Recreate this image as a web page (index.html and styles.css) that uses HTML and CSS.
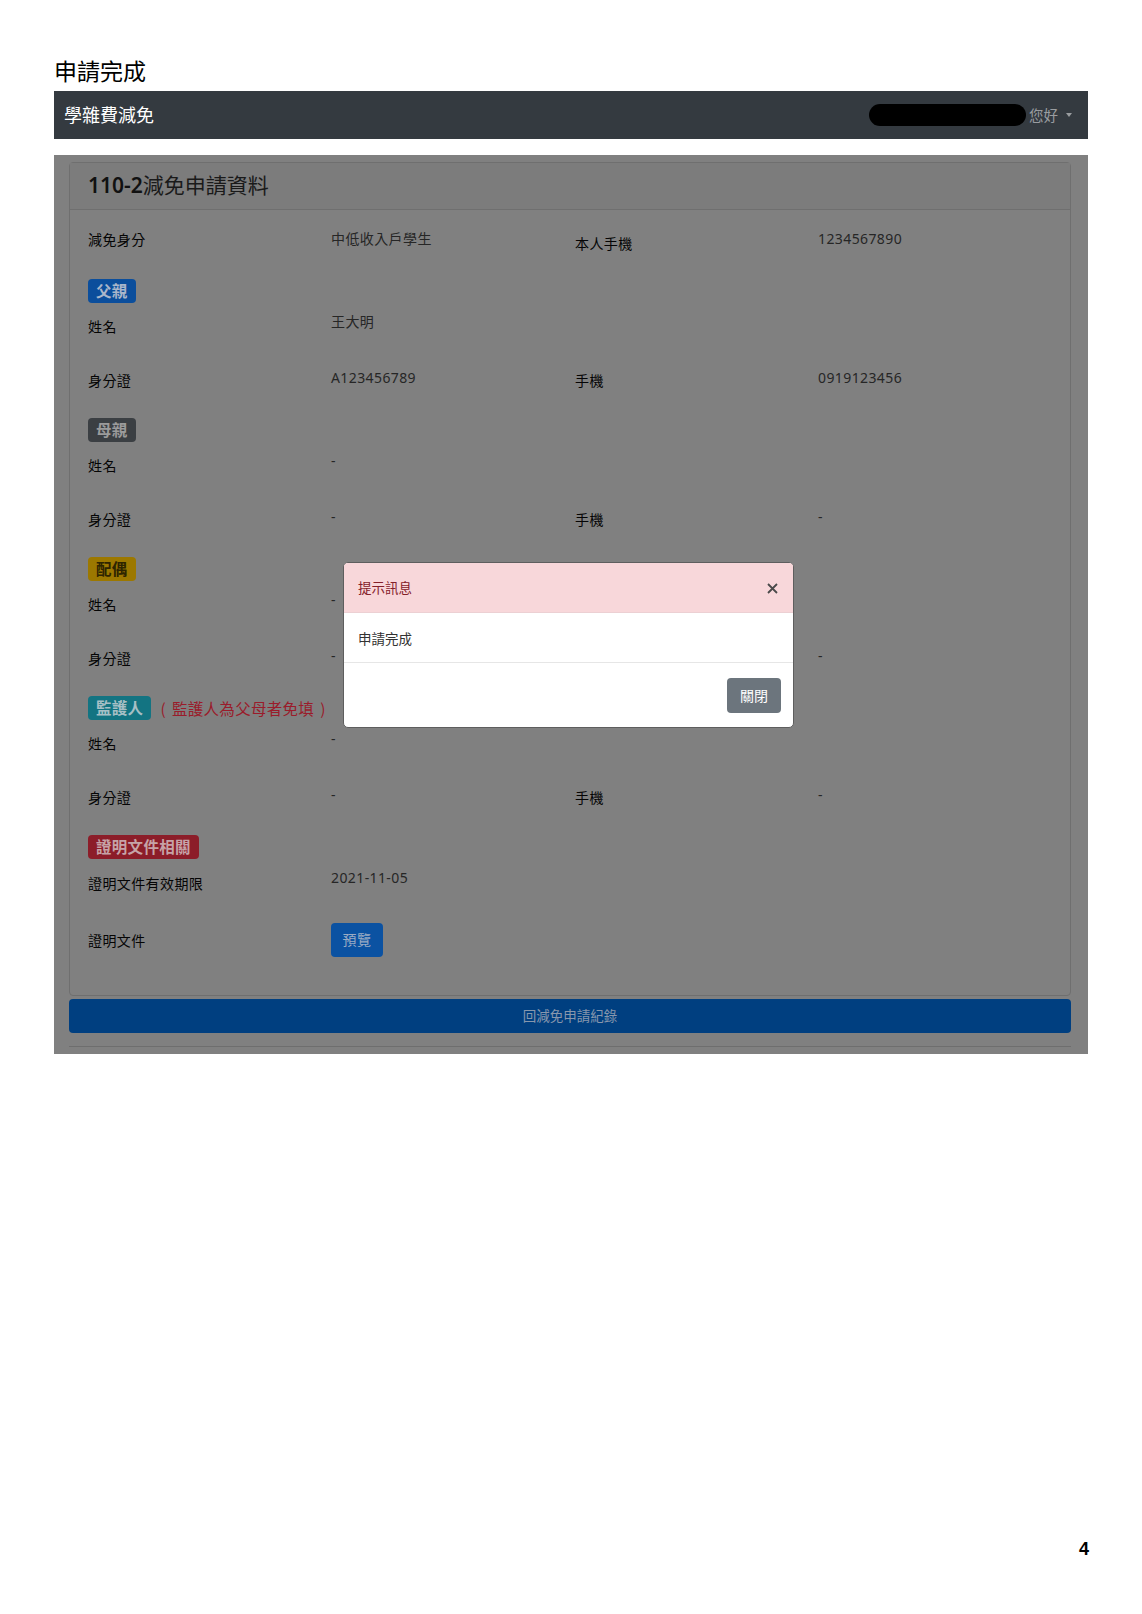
FILE: index.html
```html
<!DOCTYPE html>
<html lang="zh-Hant">
<head>
<meta charset="utf-8">
<title>申請完成</title>
<link rel="stylesheet" href="styles.css">
</head>
<body>
<div class="page">
  <h1 class="doc-title">申請完成</h1>
  <div class="shot">
    <nav class="navbar">
      <span class="brand">學雜費減免</span>
      <div class="user">
        <span class="redact"></span>
        <span class="hello">您好</span>
        <span class="caret"></span>
      </div>
    </nav>
    <div class="app">
      <div class="card">
        <div class="card-header"><span class="num">110-2</span>減免申請資料</div>
        <div class="card-body">
          <div class="row first">
            <div class="lbl">減免身分</div>
            <div class="val">中低收入戶學生</div>
            <div class="lbl low">本人手機</div>
            <div class="val">1234567890</div>
          </div>

          <div class="section">
            <div class="badge-line"><span class="badge b-primary">父親</span></div>
            <div class="row">
              <div class="lbl">姓名</div>
              <div class="val">王大明</div>
            </div>
            <div class="row second">
              <div class="lbl">身分證</div>
              <div class="val">A123456789</div>
              <div class="lbl">手機</div>
              <div class="val">0919123456</div>
            </div>
          </div>

          <div class="section">
            <div class="badge-line"><span class="badge b-dark">母親</span></div>
            <div class="row">
              <div class="lbl">姓名</div>
              <div class="val">-</div>
            </div>
            <div class="row second">
              <div class="lbl">身分證</div>
              <div class="val">-</div>
              <div class="lbl">手機</div>
              <div class="val">-</div>
            </div>
          </div>

          <div class="section">
            <div class="badge-line"><span class="badge b-warning">配偶</span></div>
            <div class="row">
              <div class="lbl">姓名</div>
              <div class="val">-</div>
            </div>
            <div class="row second">
              <div class="lbl">身分證</div>
              <div class="val">-</div>
              <div class="lbl">手機</div>
              <div class="val">-</div>
            </div>
          </div>

          <div class="section">
            <div class="badge-line"><span class="badge b-info">監護人</span><span class="note"><span class="paren-open">(</span>監護人為父母者免填<span class="paren-close">)</span></span></div>
            <div class="row">
              <div class="lbl">姓名</div>
              <div class="val">-</div>
            </div>
            <div class="row second">
              <div class="lbl">身分證</div>
              <div class="val">-</div>
              <div class="lbl">手機</div>
              <div class="val">-</div>
            </div>
          </div>

          <div class="section last">
            <div class="badge-line"><span class="badge b-danger">證明文件相關</span></div>
            <div class="row date">
              <div class="lbl">證明文件有效期限</div>
              <div class="val">2021-11-05</div>
            </div>
            <div class="row doc">
              <div class="lbl">證明文件</div>
              <div class="val"><span class="btn-preview">預覽</span></div>
            </div>
          </div>
        </div>
      </div>
      <div class="back-bar">回減免申請紀錄</div>
      <div class="foot-rule"></div>

      <div class="modal">
        <div class="modal-header">
          <span class="modal-title">提示訊息</span>
          <svg class="close-x" width="11" height="11" viewBox="0 0 11 11"><path d="M1 1 L10 10 M10 1 L1 10" stroke="#4a4a4a" stroke-width="1.8" fill="none"/></svg>
        </div>
        <div class="modal-body">申請完成</div>
        <div class="modal-footer"><span class="btn-close">關閉</span></div>
      </div>
    </div>
  </div>
  <div class="page-num">4</div>
</div>
</body>
</html>
```

FILE: styles.css
```css
* { box-sizing: border-box; }

body {
  margin: 0;
  background: #fff;
  font-family: "Noto Sans", "Noto Sans CJK TC", sans-serif;
}

.page {
  width: 1142px;
  min-height: 1614px;
  padding: 0 54px 56px;
  display: flex;
  flex-direction: column;
}

.doc-title {
  margin: 56px 0 7px;
  font-family: "Noto Sans CJK TC", sans-serif;
  font-size: 23px;
  line-height: 28px;
  font-weight: 400;
  color: #000;
}

.navbar {
  height: 48px;
  background: #343a40;
  display: flex;
  align-items: center;
  justify-content: space-between;
  padding: 0 16px 0 10px;
}

.brand {
  color: #fff;
  font-size: 18px;
  line-height: 24px;
}

.user {
  display: flex;
  align-items: center;
}

.redact {
  display: block;
  width: 157px;
  height: 22px;
  background: #000;
  border-radius: 11px;
}

.hello {
  margin-left: 3px;
  color: #9a9da0;
  font-size: 14.5px;
  line-height: 20px;
}

.caret {
  display: block;
  width: 0;
  height: 0;
  margin-left: 8px;
  border-left: 3.5px solid transparent;
  border-right: 3.5px solid transparent;
  border-top: 4px solid #9a9da0;
}

.app {
  position: relative;
  margin-top: 16px;
  background: #808080;
  padding: 7px 17px 7px 15px;
}

.card {
  border: 1px solid #6f6f6f;
  border-radius: 4px;
}

.card-header {
  background: #7c7c7c;
  border-bottom: 1px solid #6f6f6f;
  padding: 10px 18px 11px;
  font-size: 21px;
  line-height: 25px;
  color: #1a1a1a;
}

.card-header .num {
  font-weight: 600;
  color: #111;
}

.card-body {
  padding: 16px 18px 38px;
}

.row {
  display: grid;
  grid-template-columns: 243px 244px 243px 1fr;
  height: 54px;
  font-size: 14px;
  line-height: 21px;
}

.row.first { height: 53px; }

.lbl {
  padding-top: 9px;
  color: #050505;
  font-weight: 400;
  letter-spacing: 0.4px;
}

.val {
  padding-top: 4px;
  color: #262626;
  letter-spacing: 0.4px;
}

.row.first .lbl { padding-top: 3px; }
.row.first .lbl.low { padding-top: 7px; }
.row.first .val { padding-top: 2px; }

.row.second .val { padding-top: 6px; }

.section { padding-bottom: 3px; }
.section.last { padding-bottom: 0; }

.badge-line {
  height: 28px;
  display: flex;
  align-items: flex-start;
}

.badge {
  display: block;
  height: 24px;
  padding: 0 8px;
  border-radius: 4px;
  font-size: 15.5px;
  line-height: 24px;
  font-weight: 700;
  letter-spacing: 0.3px;
}

.b-primary { background: #0b4e9c; color: #a9b6ca; }
.b-dark { background: #3b3f43; color: #9b9b9b; }
.b-warning { background: #9c7800; color: #2e2500; }
.b-info { background: #137482; color: #a6bfc5; }
.b-danger { background: #8c1d29; color: #c6a3a7; }

.note {
  margin-left: 9px;
  font-family: "Noto Sans CJK TC", sans-serif;
  color: #9a1c2b;
  font-size: 15.5px;
  line-height: 24px;
  letter-spacing: 0.3px;
}

.paren-open { margin-right: 6px; }
.paren-close { margin-left: 6px; }

.row.date .lbl { padding-top: 10px; }
.row.date .val { padding-top: 4px; }

.row.doc { height: 40px; }
.row.doc .lbl { padding-top: 13px; }
.row.doc .val { padding-top: 6px; }

.btn-preview {
  display: block;
  width: 52px;
  height: 34px;
  border-radius: 4px;
  background: #0b52a2;
  color: #9aabc4;
  font-size: 14px;
  line-height: 34px;
  text-align: center;
}

.back-bar {
  margin-top: 3px;
  height: 34px;
  border-radius: 4px;
  background: #003f80;
  color: #8797ad;
  font-size: 13.5px;
  line-height: 34px;
  text-align: center;
}

.foot-rule {
  margin-top: 13px;
  height: 1px;
  background: #6e6e6e;
}

.modal {
  position: absolute;
  left: 289px;
  top: 407px;
  width: 451px;
  background: #fff;
  border: 1px solid #5e5e5e;
  border-radius: 5px;
  overflow: hidden;
}

.modal-header {
  height: 50px;
  background: #f8d7da;
  border-bottom: 1px solid #ecd0d3;
  display: flex;
  align-items: center;
  justify-content: space-between;
  padding: 0 15px 0 14px;
}

.modal-title {
  color: #842029;
  font-size: 13.5px;
  line-height: 20px;
}

.close-x { display: block; margin-top: 2px; }

.modal-body {
  height: 50px;
  padding: 0 14px;
  display: flex;
  align-items: center;
  border-bottom: 1px solid #e6e6e6;
  color: #333;
  font-size: 13.5px;
}

.modal-footer {
  height: 64px;
  display: flex;
  justify-content: flex-end;
  align-items: flex-start;
  padding: 15px 12px 0;
}

.btn-close {
  display: block;
  width: 54px;
  height: 35px;
  border-radius: 4px;
  background: #6c757d;
  color: #fff;
  font-size: 14px;
  line-height: 35px;
  text-align: center;
}

.page-num {
  margin-top: auto;
  align-self: flex-end;
  margin-right: -1px;
  font-family: "Liberation Sans", Arial, sans-serif;
  font-weight: 700;
  font-size: 18px;
  line-height: 18px;
  color: #000;
}
```
